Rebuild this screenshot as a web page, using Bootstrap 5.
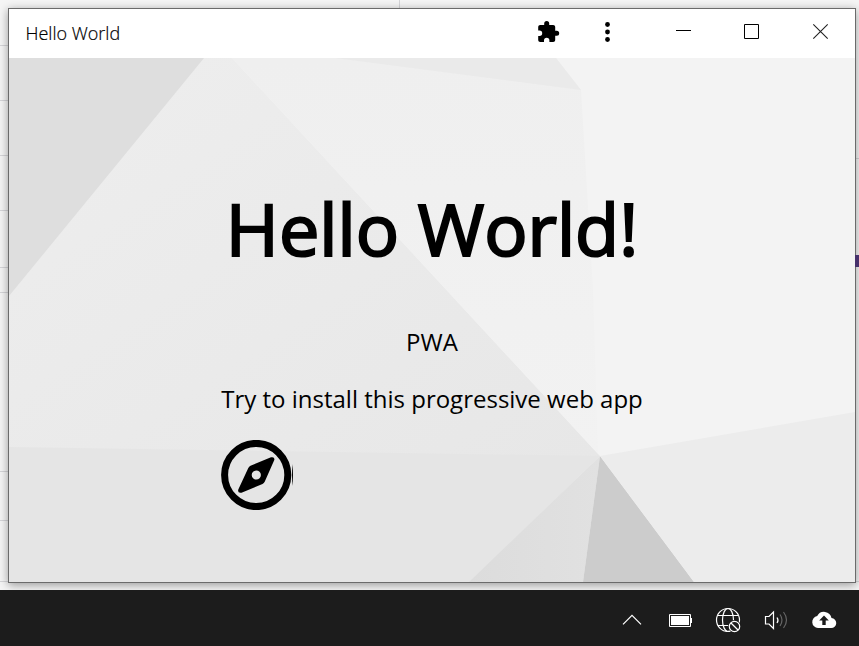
<!DOCTYPE html>
<html lang="en">
<head>
<meta charset="utf-8">
<meta name="viewport" content="width=device-width, initial-scale=1">
<title>Hello World</title>
<link href="https://cdn.jsdelivr.net/npm/bootstrap@5.3.0/dist/css/bootstrap.min.css" rel="stylesheet">
<style>
  body { height: 646px; overflow: hidden; font-family: "Open Sans", sans-serif; color: #000; background: #1c1c1c; }
  .desktop { height: 590px; padding: 8px 3px 7px 8px; background: #f5f5f5; overflow: hidden; }
  .app-window { border: 1px solid #6b6b6b; box-shadow: 0 2px 9px rgba(0,0,0,.38); }
  .titlebar { height: 49px; padding-left: 16.500px; padding-bottom: 2px; background: #fff; }
  .app-title { font-weight: 300; font-size: 18px; line-height: 24px; -webkit-text-stroke: .2px #000; }
  .stage { padding-top: 121px; }
  .facets { z-index: 0; }
  .content-col { z-index: 1; width: 422px; }
  .headline { font-size: 72px; font-weight: 400; line-height: 98px; margin: 0; white-space: nowrap; -webkit-text-stroke: 2.2px #000; }
  .copy { font-size: 24px; line-height: 33px; margin: 0; white-space: nowrap; }
  .copy-first { margin-top: 48px; }
  .copy-second { margin-top: 24px; }
  .compass { margin-top: 25px; }
  .taskbar { height: 56px; background: #1c1c1c; }
</style>
<script src="https://cdn.jsdelivr.net/npm/bootstrap@5.3.0/dist/js/bootstrap.bundle.min.js"></script>
</head>
<body>
<div class="desktop position-relative d-flex">
  <svg class="position-absolute top-0 start-0" width="859" height="590" shape-rendering="crispEdges" aria-hidden="true">
    <path d="M0 45.5H9M0 100.5H9M0 155.5H9M0 210.5H9M0 267.5H9M0 292.5H9M0 471.5H9M0 520.5H9M0 581.5H9M855 158.5h4M855 581.5h4M399.5 0V9" stroke="#d5d5d8" fill="none"/>
  </svg>
  <main class="app-window position-relative flex-fill d-flex flex-column">
    <header class="titlebar d-flex align-items-center justify-content-between">
      <span class="app-title">Hello World</span>
      <svg class="align-self-start" width="335" height="47" viewBox="520 9 335 47" role="img" aria-label="Window controls">
        <path transform="translate(536.2 20.4)" d="M20.5 10.3H19V6.6c0-1.1-.9-2-2-2h-4V3.1a2.5 2.5 0 0 0-5 0v1.5H4c-1.1 0-2 .9-2 2v3.6h1.3a2.7 2.7 0 0 1 0 5.4H2v4c0 1.1.9 2 2 2h3.8v-1.5a2.7 2.7 0 0 1 5.4 0v1.5H17c1.1 0 2-.9 2-2v-4.3h1.5a2.5 2.5 0 0 0 0-5z"/>
        <circle cx="607.5" cy="24.5" r="2.4"/><circle cx="607.5" cy="32" r="2.4"/><circle cx="607.5" cy="39.5" r="2.4"/>
        <path d="M676 30.5h15M744.5 24.5h14v14h-14z" fill="none" stroke="#000"/>
        <path d="M813.3 24.3l14.4 14.4M827.7 24.3l-14.4 14.4" fill="none" stroke="#222" stroke-width="1.1"/>
      </svg>
    </header>
    <section class="stage position-relative flex-fill d-flex justify-content-center">
      <svg class="facets position-absolute top-0 start-0 w-100 h-100" viewBox="9 58 846 524" preserveAspectRatio="none" aria-hidden="true">
        <defs>
          <linearGradient id="slope" x1="0" y1="0" x2="1" y2="1"><stop offset="0" stop-color="#eee"/><stop offset="1" stop-color="#e7e7e7"/></linearGradient>
          <linearGradient id="pane" x1="0" y1="0" x2="0" y2="1"><stop offset="0" stop-color="#efefef"/><stop offset="1" stop-color="#f2f2f2"/></linearGradient>
          <linearGradient id="fold" x1="0" y1="0" x2="1" y2="0"><stop offset="0" stop-color="#dcdcdc"/><stop offset="1" stop-color="#e1e1e1"/></linearGradient>
        </defs>
        <path fill="#f3f3f3" d="M9 58h846v524H9z"/>
        <path fill="url(#slope)" d="M9 58H232L600 456 9 456z"/>
        <path fill="#dedede" d="M9 58H204L9 296z"/>
        <path fill="url(#pane)" d="M232 58H556L581 90 593 290 598 454 600 456z"/>
        <path fill="#eaeaea" d="M335 58H556L581 90z"/>
        <path fill="#e5e5e5" d="M9 447L600 456 470 582H9z"/>
        <path fill="url(#fold)" d="M600 456L469 582H583z"/>
        <path fill="#ccc" d="M600 456L583 582H694z"/>
        <path fill="#ececec" d="M600 456L855 412V582H694z"/>
      </svg>
      <div class="content-col position-relative text-center">
        <h1 class="headline">Hello World!</h1>
        <p class="copy copy-first">PWA</p>
        <p class="copy copy-second">Try to install this progressive web app</p>
        <svg class="compass d-block" width="72" height="70" viewBox="221 440 72 70" role="img" aria-label="Compass">
          <circle cx="256.200" cy="475" r="31.6" fill="none" stroke="#000" stroke-width="7"/>
          <path fill-rule="evenodd" d="M271 457.300L250.500 465.800Q249 466.500 248.300 468L238.300 489.500Q237.300 493.500 241.500 492.700L262.500 484Q264 483.200 264.700 481.800L274.300 460Q275 456.500 271 457.300zM256.300 470.400a4.600 4.600 0 1 1 0 9.200a4.600 4.600 0 1 1 0-9.200z"/>
          <path d="M293 464Q291 475 293 486z"/>
        </svg>
      </div>
    </section>
  </main>
  <svg class="position-absolute top-0 end-0" width="4" height="590" aria-hidden="true"><path d="M0 255h4v12H0z" fill="#46306b"/></svg>
</div>
<footer class="taskbar d-flex justify-content-end">
  <svg width="259" height="56" viewBox="600 590 259 56" fill="none" stroke="#fff" stroke-width="1.2" role="img" aria-label="System tray">
    <path d="M623 624.300L632 615.300L641 624.300"/>
    <path d="M669.500 614.500h21v12h-21z" stroke-width="1"/><path d="M671 616h18v9h-18zM691 618h1v5h-1z" fill="#fff" stroke="none"/>
    <circle cx="728" cy="620" r="11.500"/><ellipse cx="728" cy="620" rx="5.500" ry="11.500"/><path d="M718 615.500h20M718 625.500h12"/>
    <circle cx="734.500" cy="626.500" r="6.500" fill="#1c1c1c" stroke="none"/><circle cx="734.500" cy="626.500" r="5.200"/><path d="M731 623l7 7"/>
    <path d="M765.500 616.500h3.500l4.500-4.500v16.500l-4.500-4.500h-3.500z"/><path d="M777 617.500q2 2.700 0 5.500"/>
    <path d="M780 614.500q4 5.500 0 11.500M783.500 612q6 8 0 16" stroke="#666"/>
    <path d="M818 628a6 6 0 0 1-.8-11.900a7.600 7.600 0 0 1 14.300 1.900a5 5 0 0 1-.5 10z" fill="#fff" stroke="none"/>
    <path d="M824 615.500l4.800 5H825.700v4.500h-3.400v-4.500h-3.100z" fill="#1c1c1c" stroke="none"/>
  </svg>
</footer>
</body>
</html>
